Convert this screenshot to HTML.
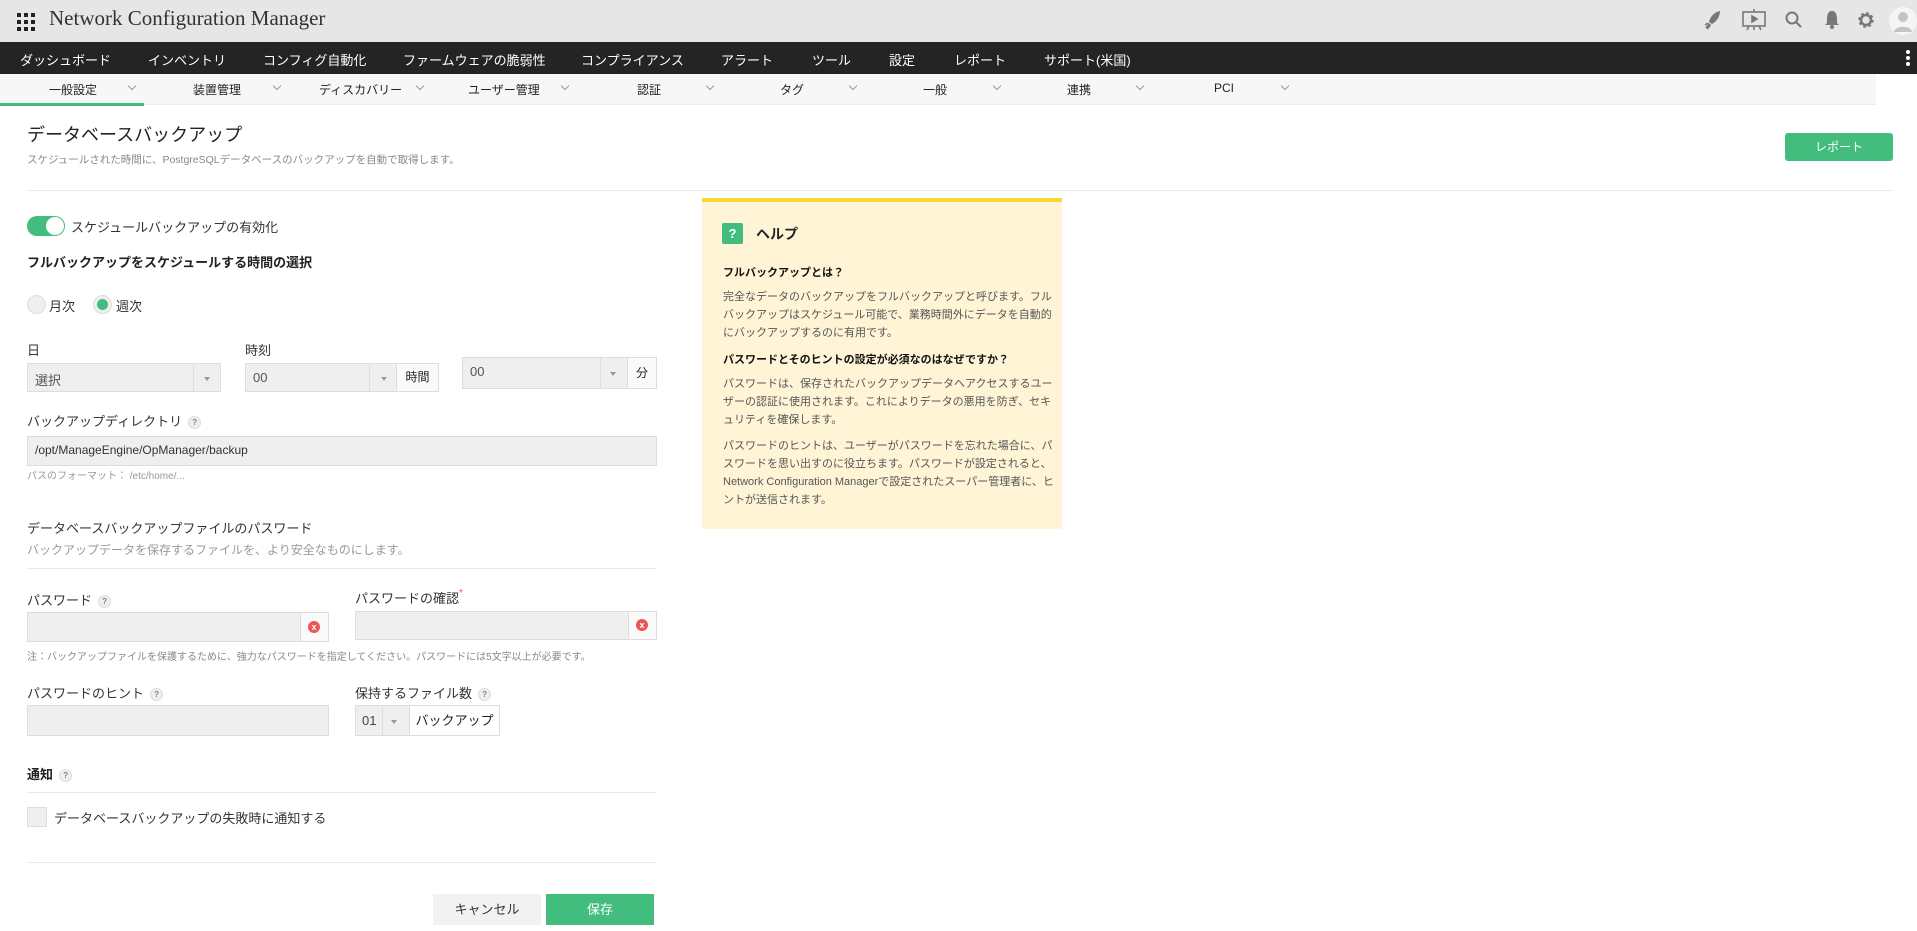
<!DOCTYPE html>
<html><head><meta charset="utf-8">
<style>
*{box-sizing:border-box;margin:0;padding:0}
body{width:1917px;height:931px;overflow:hidden;background:#fff;position:relative;font-family:"Liberation Sans","Noto Sans CJK JP",sans-serif;color:#222}
.a{position:absolute;white-space:nowrap}
.hdr{left:0;top:0;width:1917px;height:42px;background:#e6e6e6}
.nav{left:0;top:42px;width:1917px;height:32px;background:#242424}
.nav span{position:absolute;top:8px;color:#fff;font-size:13px}
.sub{left:0;top:74px;width:1876px;height:31px;background:#f7f7f7;border-bottom:1px solid #eee}
.sub span{position:absolute;top:7px;font-size:12px;color:#222}
.sub i{position:absolute;top:9px;width:6px;height:6px;border-right:1px solid #999;border-bottom:1px solid #999;transform:rotate(45deg)}
.lbl{font-size:13px;color:#333}
.inp{position:absolute;background:#efefef;border:1px solid #ddd;overflow:hidden}
.q{display:inline-block;width:13px;height:13px;border-radius:50%;background:#eee;border:1px solid #ddd;font-size:8px;text-align:center;line-height:11px;color:#555;vertical-align:middle;margin-left:6px}
.caret{position:absolute;top:50%;width:0;height:0;border-left:3px solid transparent;border-right:3px solid transparent;border-top:4px solid #999}
.x{position:absolute;width:12px;height:12px;border-radius:50%;background:#e55;color:#fff;font-size:9px;line-height:12px;text-align:center;font-weight:bold}
.hl{background:#e8e8e8;height:1px}
.help p{font-size:11px;color:#555;line-height:18px}
</style></head><body>
<div class="a hdr"></div>
<svg class="a" style="left:17px;top:13px" width="18" height="18" viewBox="0 0 18 18" fill="#222"><rect x="0" y="0" width="4" height="4"/><rect x="7" y="0" width="4" height="4"/><rect x="14" y="0" width="4" height="4"/><rect x="0" y="7" width="4" height="4"/><rect x="7" y="7" width="4" height="4"/><rect x="14" y="7" width="4" height="4"/><rect x="0" y="14" width="4" height="4"/><rect x="7" y="14" width="4" height="4"/><rect x="14" y="14" width="4" height="4"/></svg>
<div class="a" style="left:49px;top:6px;font-family:'Liberation Serif',serif;font-size:21px;color:#333">Network Configuration Manager</div>
<svg class="a" style="left:1704px;top:10px" width="18" height="20" viewBox="0 0 18 20" fill="#777"><path d="M16 1 C10 2 6 7 5 12 L8 14 C12 12 16 7 16 1Z"/><path d="M2 18 L5 14 L6 15 Z M1 15 L4 13 M3 19 L6 16" stroke="#777" stroke-width="1.5"/></svg>
<svg class="a" style="left:1741px;top:9px" width="26" height="22" viewBox="0 0 26 22" fill="none" stroke="#777" stroke-width="1.6"><rect x="2" y="3" width="22" height="14"/><path d="M11 7 L16 10 L11 13Z" fill="#777"/><path d="M13 0 V3 M8 17 L6 21 M18 17 L20 21 M13 17 V21"/></svg>
<svg class="a" style="left:1785px;top:11px" width="18" height="18" viewBox="0 0 18 18" fill="none" stroke="#777" stroke-width="2"><circle cx="7" cy="7" r="5.5"/><path d="M11 11 L16 16"/></svg>
<svg class="a" style="left:1825px;top:10px" width="14" height="19" viewBox="0 0 14 19" fill="#777"><path d="M7 1 C3 1 2 5 2 9 L2 13 L0 15 H14 L12 13 V9 C12 5 11 1 7 1Z"/><circle cx="7" cy="17" r="2"/></svg>
<svg class="a" style="left:1857px;top:11px" width="18" height="18" viewBox="0 0 18 18"><circle cx="9" cy="9" r="6" fill="none" stroke="#777" stroke-width="3.5" stroke-dasharray="2.4 2.3"/><circle cx="9" cy="9" r="5" fill="none" stroke="#777" stroke-width="2.5"/></svg>
<svg class="a" style="left:1889px;top:6px" width="28" height="30" viewBox="0 0 28 30"><circle cx="14" cy="15" r="14" fill="#f5f5f5"/><circle cx="14" cy="11" r="5" fill="#c4c4c4"/><path d="M5 26 C6 19 22 19 23 26Z" fill="#c4c4c4"/></svg>
<div class="a nav">
<span style="left:20px">ダッシュボード</span><span style="left:148px">インベントリ</span><span style="left:263px">コンフィグ自動化</span><span style="left:403px">ファームウェアの脆弱性</span><span style="left:581px">コンプライアンス</span><span style="left:721px">アラート</span><span style="left:812px">ツール</span><span style="left:889px">設定</span><span style="left:954px">レポート</span><span style="left:1044px">サポート(米国)</span>
<div style="position:absolute;left:1906px;top:8px;width:4px;height:4px;border-radius:2px;background:#fff;box-shadow:0 6px 0 #fff,0 12px 0 #fff"></div>
</div>
<div class="a sub">
<span style="left:49px">一般設定</span><i style="left:129px"></i>
<span style="left:193px">装置管理</span><i style="left:274px"></i>
<span style="left:319px">ディスカバリー</span><i style="left:417px"></i>
<span style="left:468px">ユーザー管理</span><i style="left:562px"></i>
<span style="left:637px">認証</span><i style="left:707px"></i>
<span style="left:780px">タグ</span><i style="left:850px"></i>
<span style="left:923px">一般</span><i style="left:994px"></i>
<span style="left:1067px">連携</span><i style="left:1137px"></i>
<span style="left:1214px">PCI</span><i style="left:1282px"></i>
</div>
<div class="a" style="left:0;top:103px;width:144px;height:3px;background:#3fbb7a"></div>

<div class="a" style="left:27px;top:121px;font-size:18px;color:#222">データベースバックアップ</div>
<div class="a" style="left:27px;top:152px;font-size:10.5px;color:#888">スケジュールされた時間に、PostgreSQLデータベースのバックアップを自動で取得します。</div>
<div class="a" style="left:1785px;top:133px;width:108px;height:28px;background:#43bd7e;border-radius:3px;color:#fff;font-size:12px;text-align:center;line-height:28px">レポート</div>
<div class="a hl" style="left:27px;top:190px;width:1866px"></div>

<div class="a" style="left:27px;top:216px;width:38px;height:20px;border-radius:10px;background:#43bd7e"></div>
<div class="a" style="left:46px;top:217px;width:18px;height:18px;border-radius:50%;background:#fff"></div>
<div class="a lbl" style="left:71px;top:217px;color:#333">スケジュールバックアップの有効化</div>
<div class="a" style="left:27px;top:252px;font-size:13px;font-weight:bold;color:#222">フルバックアップをスケジュールする時間の選択</div>
<div class="a" style="left:27px;top:295px;width:19px;height:19px;border-radius:50%;background:#efefef;border:1px solid #ddd"></div>
<div class="a lbl" style="left:49px;top:296px">月次</div>
<div class="a" style="left:93px;top:295px;width:19px;height:19px;border-radius:50%;background:#efefef;border:1px solid #ddd"></div>
<div class="a" style="left:97px;top:299px;width:11px;height:11px;border-radius:50%;background:#43bd7e"></div>
<div class="a lbl" style="left:116px;top:296px">週次</div>

<div class="a lbl" style="left:27px;top:340px">日</div>
<div class="a lbl" style="left:245px;top:340px">時刻</div>
<div class="inp" style="left:27px;top:363px;width:194px;height:29px"><span class="a lbl" style="left:7px;top:6px;color:#555">選択</span><div style="position:absolute;left:165px;top:0;width:1px;height:27px;background:#ddd"></div><div class="caret" style="left:176px;top:13px"></div></div>
<div class="inp" style="left:245px;top:363px;width:194px;height:29px;"><span class="a lbl" style="left:7px;top:6px;color:#555">00</span><div style="position:absolute;left:123px;top:0;width:1px;height:27px;background:#ddd"></div><div class="caret" style="left:135px;top:13px"></div><div style="position:absolute;left:150px;top:0;width:42px;height:27px;background:#fafafa;border-left:1px solid #ddd;font-size:12px;text-align:center;line-height:27px">時間</div></div>
<div class="inp" style="left:462px;top:357px;width:195px;height:32px"><span class="a lbl" style="left:7px;top:6px;color:#555">00</span><div style="position:absolute;left:137px;top:0;width:1px;height:30px;background:#ddd"></div><div class="caret" style="left:147px;top:14px"></div><div style="position:absolute;left:164px;top:0;width:29px;height:30px;background:#fafafa;border-left:1px solid #ddd;font-size:12px;text-align:center;line-height:30px">分</div></div>

<div class="a lbl" style="left:27px;top:411px">バックアップディレクトリ<span class="q">?</span></div>
<div class="inp" style="left:27px;top:436px;width:630px;height:30px"><span class="a" style="left:7px;top:6px;font-size:12px;color:#333">/opt/ManageEngine/OpManager/backup</span></div>
<div class="a" style="left:27px;top:467px;font-size:10px;color:#999">パスのフォーマット： /etc/home/...</div>

<div class="a lbl" style="left:27px;top:518px">データベースバックアップファイルのパスワード</div>
<div class="a" style="left:27px;top:541px;font-size:12px;color:#999">バックアップデータを保存するファイルを、より安全なものにします。</div>
<div class="a hl" style="left:27px;top:568px;width:630px"></div>

<div class="a lbl" style="left:27px;top:590px">パスワード<span class="q">?</span></div>
<div class="a lbl" style="left:355px;top:588px">パスワードの確認<span style="color:#e55;font-size:10px;vertical-align:top">*</span></div>
<div class="inp" style="left:27px;top:612px;width:302px;height:30px"><div style="position:absolute;left:272px;top:0;width:28px;height:28px;background:#fafafa;border-left:1px solid #ddd"></div><div class="x" style="left:280px;top:8px">x</div></div>
<div class="inp" style="left:355px;top:611px;width:302px;height:29px"><div style="position:absolute;left:272px;top:0;width:28px;height:27px;background:#fafafa;border-left:1px solid #ddd"></div><div class="x" style="left:280px;top:7px">x</div></div>
<div class="a" style="left:27px;top:648px;font-size:10px;color:#888">注：バックアップファイルを保護するために、強力なパスワードを指定してください。パスワードには5文字以上が必要です。</div>

<div class="a lbl" style="left:27px;top:683px">パスワードのヒント<span class="q">?</span></div>
<div class="a lbl" style="left:355px;top:683px">保持するファイル数<span class="q">?</span></div>
<div class="inp" style="left:27px;top:705px;width:302px;height:31px"></div>
<div class="inp" style="left:355px;top:705px;width:145px;height:31px"><span class="a lbl" style="left:6px;top:7px;color:#444">01</span><div style="position:absolute;left:26px;top:0;width:1px;height:29px;background:#ddd"></div><div class="caret" style="left:35px;top:14px"></div><div style="position:absolute;left:53px;top:0;width:90px;height:29px;background:#fff;border-left:1px solid #ddd;font-size:13px;text-align:center;line-height:29px">バックアップ</div></div>

<div class="a" style="left:27px;top:764px;font-size:13px;font-weight:bold">通知<span class="q" style="font-weight:normal">?</span></div>
<div class="a hl" style="left:27px;top:792px;width:630px"></div>
<div class="a" style="left:27px;top:807px;width:20px;height:20px;background:#efefef;border:1px solid #ddd"></div>
<div class="a lbl" style="left:54px;top:808px">データベースバックアップの失敗時に通知する</div>
<div class="a hl" style="left:27px;top:862px;width:630px"></div>

<div class="a" style="left:433px;top:894px;width:108px;height:31px;background:#f2f2f2;font-size:13px;text-align:center;line-height:31px;color:#333">キャンセル</div>
<div class="a" style="left:546px;top:894px;width:108px;height:31px;background:#43bd7e;font-size:13px;text-align:center;line-height:31px;color:#fff">保存</div>

<div class="a help" style="left:702px;top:198px;width:360px;height:331px;background:#fff5d6;border-top:4px solid #f9d733;white-space:normal">
<div style="position:absolute;left:20px;top:21px;width:21px;height:21px;background:#43bd7e;border-radius:2px;color:#fff;font-weight:bold;font-size:13px;text-align:center;line-height:21px">?</div>
<div style="position:absolute;left:54px;top:22px;font-size:14px;font-weight:bold;color:#222">ヘルプ</div>
<div style="position:absolute;left:21px;top:62px;font-size:11px;font-weight:bold;color:#111">フルバックアップとは？</div>
<p style="position:absolute;left:21px;top:86px;width:333px">完全なデータのバックアップをフルバックアップと呼びます。フルバックアップはスケジュール可能で、業務時間外にデータを自動的にバックアップするのに有用です。</p>
<div style="position:absolute;left:21px;top:149px;font-size:11px;font-weight:bold;color:#111">パスワードとそのヒントの設定が必須なのはなぜですか？</div>
<p style="position:absolute;left:21px;top:173px;width:333px">パスワードは、保存されたバックアップデータへアクセスするユーザーの認証に使用されます。これによりデータの悪用を防ぎ、セキュリティを確保します。</p>
<p style="position:absolute;left:21px;top:235px;width:333px">パスワードのヒントは、ユーザーがパスワードを忘れた場合に、パスワードを思い出すのに役立ちます。パスワードが設定されると、Network Configuration Managerで設定されたスーパー管理者に、ヒントが送信されます。</p>
</div>
</body></html>
